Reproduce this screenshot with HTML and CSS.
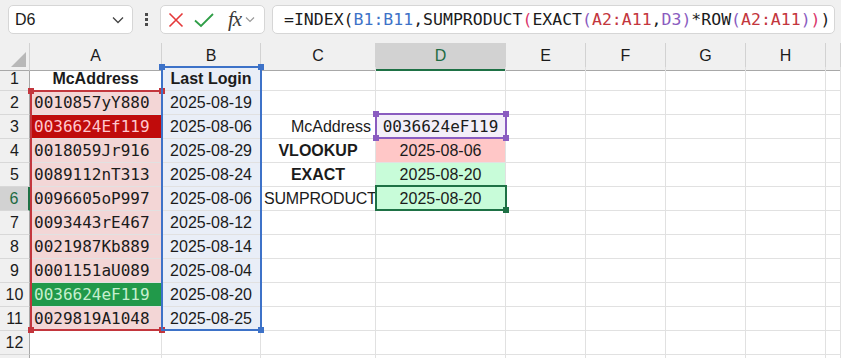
FILE: index.html
```html
<!doctype html>
<html lang="en">

<head>
	<meta charset="UTF-8">
	<title>INDEX / SUMPRODUCT / EXACT</title>
	<link rel="stylesheet" href="styles.css">
</head>

<body>
	<div class="toolbar">
		<div class="namebox">
			<span>D6</span>
			<svg width="12" height="8" viewBox="0 0 12 8"><path d="M1 1.5 L6 6.5 L11 1.5" fill="none" stroke="#444" stroke-width="1.3"/></svg>
		</div>
		<div class="dots"><i></i><i></i><i></i></div>
		<div class="fxbox">
			<svg class="ico-x" width="16" height="16" viewBox="0 0 16 16"><path d="M1.5 1.5 L14.5 14.5 M14.5 1.5 L1.5 14.5" stroke="#e5393a" stroke-width="1.6"/></svg>
			<svg class="ico-ok" width="20" height="16" viewBox="0 0 20 16"><path d="M1 8.5 L7 14 L19 2" fill="none" stroke="#2f9e47" stroke-width="1.8"/></svg>
			<span class="fx">fx</span>
			<svg width="10" height="7" viewBox="0 0 10 7"><path d="M1 1.5 L5 5.5 L9 1.5" fill="none" stroke="#999" stroke-width="1.2"/></svg>
		</div>
		<div class="formula">=INDEX(<span class="c-blue">B1:B11</span>,SUMPRODUCT<span class="c-pink">(</span>EXACT<span class="c-purple">(</span><span class="c-red">A2:A11</span>,<span class="c-purple">D3)</span>*ROW<span class="c-purple">(</span><span class="c-red">A2:A11</span><span class="c-purple">)</span><span class="c-pink">)</span>)</div>
	</div>

	<div class="sheet">
		<div class="row head">
			<div class="corner"></div>
			<div class="ch">A</div><div class="ch">B</div><div class="ch">C</div><div class="ch sel">D</div>
			<div class="ch">E</div><div class="ch">F</div><div class="ch">G</div><div class="ch">H</div><div class="ch"></div>
		</div>
		<div class="row">
			<div class="rh">1</div>
			<div class="cell bold center">McAddress</div><div class="cell blue bold center">Last Login</div>
			<div class="cell"></div><div class="cell"></div><div class="cell"></div><div class="cell"></div><div class="cell"></div><div class="cell"></div><div class="cell"></div>
		</div>
		<div class="row">
			<div class="rh">2</div>
			<div class="cell pink mono">0010857yY880</div><div class="cell blue center">2025-08-19</div>
			<div class="cell"></div><div class="cell"></div><div class="cell"></div><div class="cell"></div><div class="cell"></div><div class="cell"></div><div class="cell"></div>
		</div>
		<div class="row">
			<div class="rh">3</div>
			<div class="cell bad mono">0036624Ef119</div><div class="cell blue center">2025-08-06</div>
			<div class="cell right">McAddress</div><div class="cell lav mono center">0036624eF119</div>
			<div class="cell"></div><div class="cell"></div><div class="cell"></div><div class="cell"></div><div class="cell"></div>
		</div>
		<div class="row">
			<div class="rh">4</div>
			<div class="cell pink mono">0018059Jr916</div><div class="cell blue center">2025-08-29</div>
			<div class="cell bold center">VLOOKUP</div><div class="cell rose center">2025-08-06</div>
			<div class="cell"></div><div class="cell"></div><div class="cell"></div><div class="cell"></div><div class="cell"></div>
		</div>
		<div class="row">
			<div class="rh">5</div>
			<div class="cell pink mono">0089112nT313</div><div class="cell blue center">2025-08-24</div>
			<div class="cell bold center">EXACT</div><div class="cell mint center">2025-08-20</div>
			<div class="cell"></div><div class="cell"></div><div class="cell"></div><div class="cell"></div><div class="cell"></div>
		</div>
		<div class="row">
			<div class="rh sel">6</div>
			<div class="cell pink mono">0096605oP997</div><div class="cell blue center">2025-08-06</div>
			<div class="cell center tight">SUMPRODUCT</div><div class="cell mint center">2025-08-20</div>
			<div class="cell"></div><div class="cell"></div><div class="cell"></div><div class="cell"></div><div class="cell"></div>
		</div>
		<div class="row">
			<div class="rh">7</div>
			<div class="cell pink mono">0093443rE467</div><div class="cell blue center">2025-08-12</div>
			<div class="cell"></div><div class="cell"></div><div class="cell"></div><div class="cell"></div><div class="cell"></div><div class="cell"></div><div class="cell"></div>
		</div>
		<div class="row">
			<div class="rh">8</div>
			<div class="cell pink mono">0021987Kb889</div><div class="cell blue center">2025-08-14</div>
			<div class="cell"></div><div class="cell"></div><div class="cell"></div><div class="cell"></div><div class="cell"></div><div class="cell"></div><div class="cell"></div>
		</div>
		<div class="row">
			<div class="rh">9</div>
			<div class="cell pink mono">0001151aU089</div><div class="cell blue center">2025-08-04</div>
			<div class="cell"></div><div class="cell"></div><div class="cell"></div><div class="cell"></div><div class="cell"></div><div class="cell"></div><div class="cell"></div>
		</div>
		<div class="row">
			<div class="rh">10</div>
			<div class="cell good mono">0036624eF119</div><div class="cell blue center">2025-08-20</div>
			<div class="cell"></div><div class="cell"></div><div class="cell"></div><div class="cell"></div><div class="cell"></div><div class="cell"></div><div class="cell"></div>
		</div>
		<div class="row">
			<div class="rh">11</div>
			<div class="cell pink mono">0029819A1048</div><div class="cell blue center">2025-08-25</div>
			<div class="cell"></div><div class="cell"></div><div class="cell"></div><div class="cell"></div><div class="cell"></div><div class="cell"></div><div class="cell"></div>
		</div>
		<div class="row">
			<div class="rh">12</div>
			<div class="cell"></div><div class="cell"></div><div class="cell"></div><div class="cell"></div><div class="cell"></div><div class="cell"></div><div class="cell"></div><div class="cell"></div><div class="cell"></div>
		</div>
		<div class="row">
			<div class="rh"></div>
			<div class="cell"></div><div class="cell"></div><div class="cell"></div><div class="cell"></div><div class="cell"></div><div class="cell"></div><div class="cell"></div><div class="cell"></div><div class="cell"></div>
		</div>

		<!-- range highlights from the formula -->
		<div class="range r-red"><b class="tl"></b><b class="tr"></b><b class="bl"></b><b class="br"></b></div>
		<div class="range r-blue"><b class="tl"></b><b class="tr"></b><b class="br"></b></div>
		<div class="range r-purple"><b class="tl"></b><b class="tr"></b><b class="bl"></b><b class="br"></b></div>
		<div class="range r-active"><b class="br"></b></div>
	</div>
</body>

</html>
```

FILE: styles.css
```css
* {
	padding: 0;
	margin: 0;
	box-sizing: border-box;
}

body {
	width: 841px;
	height: 358px;
	overflow: hidden;
	background: #f0f0f0;
	font-family: 'Liberation Sans', Arial, sans-serif;
	color: #1b1b1b;
}

/* formula bar */
.toolbar {
	height: 43px;
	display: flex;
	align-items: flex-start;
	padding: 5px 0 0 8px;
}

.namebox,
.fxbox,
.formula {
	height: 29px;
	background: #fff;
	border: 1px solid #d6d6d6;
	border-radius: 5px;
	display: flex;
	align-items: center;
}

.namebox {
	width: 125px;
	padding: 0 8px 0 6px;
	justify-content: space-between;
	font-size: 16px;
}

.dots {
	width: 27px;
	height: 29px;
	display: flex;
	flex-direction: column;
	align-items: center;
	justify-content: center;
	gap: 2px;
}

.dots i {
	width: 3px;
	height: 3px;
	background: #4a4a4a;
}

.fxbox {
	width: 105px;
	padding: 0 4px 0 7px;
}

.ico-x {
	margin-right: 10px;
}

.ico-ok {
	margin-right: 14px;
}

.fx {
	font-family: 'Liberation Serif', 'Times New Roman', serif;
	font-style: italic;
	font-size: 21px;
	color: #3a3a3a;
	margin-right: 4px;
	letter-spacing: -1px;
}

.formula {
	margin-left: 7px;
	width: 563px;
	padding-left: 11px;
	font-family: 'DejaVu Sans Mono', 'Liberation Mono', monospace;
	font-size: 16.5px;
	white-space: nowrap;
	overflow: hidden;
}

.c-blue { color: #3d72c8; }
.c-red { color: #c3363d; }
.c-purple { color: #8a5cc0; }
.c-pink { color: #d9366b; }

/* grid */
.sheet {
	position: relative;
	height: 315px;
	overflow: hidden;
	background: #fff;
}

.row {
	display: grid;
	grid-template-columns: 30px 132px 99px 115px 130px 80px 80px 80px 80px 15px;
	height: 24px;
}

.row > div {
	border-right: 1px solid #e1e1e1;
	border-bottom: 1px solid #e1e1e1;
	line-height: 23px;
	font-size: 16px;
	white-space: nowrap;
	overflow: visible;
}

.head > div {
	background: #f0f0f0;
	border-right-color: #d2d2d2;
	border-bottom-color: #a8a8a8;
	text-align: center;
	font-size: 16px;
	line-height: 26px;
}

.head .sel {
	background: #d2d2d2;
	color: #1e6b43;
	border-bottom: 2px solid #1e7145;
}

.corner {
	position: relative;
}

.corner::after {
	content: '';
	position: absolute;
	right: 3px;
	bottom: 3px;
	border-left: 15px solid transparent;
	border-bottom: 15px solid #b8b8b8;
}

.row .rh {
	background: #f0f0f0;
	border-right-color: #a8a8a8;
	border-bottom-color: #d8d8d8;
	text-align: center;
}

.row .rh.sel {
	background: #d2d2d2;
	color: #1e6b43;
	border-right: 2px solid #1e7145;
}

.cell {
	padding: 0 4px;
}

.mono {
	font-family: 'DejaVu Sans Mono', 'Liberation Mono', monospace;
	font-size: 16.5px;
}

.row .bold {
	font-weight: bold;
}

.center {
	text-align: center;
}

.right {
	text-align: right;
}

.row .tight {
	padding: 0 2px 0 3px;
	letter-spacing: -0.2px;
}

.row .pink { background: #f3d6d6; }
.row .blue { background: #e9eef7; }
.row .bad { background: #c00b0b; color: #ffc7ce; }
.row .good { background: #21994a; color: #c6efce; }
.row .lav { background: #f3eff9; }
.row .rose { background: #ffc7c7; }
.row .mint { background: #c8fcd9; }

/* formula range highlights */
.range {
	position: absolute;
	border: 2px solid;
}

.range b {
	position: absolute;
	width: 6px;
	height: 6px;
}

.range .tl { left: -4px; top: -4px; }
.range .tr { right: -4px; top: -4px; }
.range .bl { left: -4px; bottom: -4px; }
.range .br { right: -4px; bottom: -4px; }

.r-red {
	left: 30px;
	top: 47px;
	width: 133px;
	height: 241px;
	border-color: #c3363d;
}

.r-red b { background: #c3363d; }

.r-blue {
	left: 161px;
	top: 23px;
	width: 101px;
	height: 265px;
	border-color: #3d72c8;
}

.r-blue b { background: #3d72c8; }

.r-purple {
	left: 375px;
	top: 70px;
	width: 132px;
	height: 26px;
	border-color: #8a5cc0;
}

.r-purple b { background: #8a5cc0; }

.r-active {
	left: 375px;
	top: 142px;
	width: 132px;
	height: 26px;
	border-color: #1e7145;
}

.r-active b {
	background: #1e7145;
	right: -4px;
	bottom: -4px;
}
```
